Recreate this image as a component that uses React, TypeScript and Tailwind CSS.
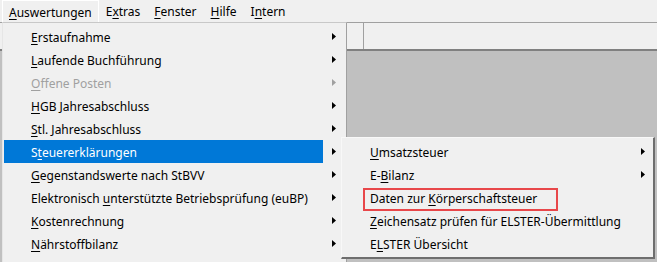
import React from "react";

type Item = {
  pre?: string;
  key?: string;
  post?: string;
  arrow?: boolean;
  disabled?: boolean;
  active?: boolean;
};

const mainItems: Item[] = [
  { key: "E", post: "rstaufnahme", arrow: true },
  { key: "L", post: "aufende Buchführung", arrow: true },
  { key: "O", post: "ffene Posten", arrow: true, disabled: true },
  { key: "H", post: "GB Jahresabschluss", arrow: true },
  { key: "S", post: "tl. Jahresabschluss", arrow: true },
  { pre: "S", key: "t", post: "euererklärungen", arrow: true, active: true },
  { key: "G", post: "egenstandswerte nach StBVV", arrow: true },
  { pre: "Elektronisch ", key: "u", post: "nterstützte Betriebsprüfung (euBP)", arrow: true },
  { key: "K", post: "ostenrechnung", arrow: true },
  { key: "N", post: "ährstoffbilanz", arrow: true },
];

const subItems: Item[] = [
  { key: "U", post: "msatzsteuer", arrow: true },
  { pre: "E-", key: "B", post: "ilanz", arrow: true },
  { pre: "Daten zur ", key: "K", post: "örperschaftsteuer" },
  { key: "Z", post: "eichensatz prüfen für ELSTER-Übermittlung" },
  { pre: "E", key: "L", post: "STER Übersicht" },
];

function Label({ item }: { item: Item }) {
  return (
    <span className="whitespace-pre">
      {item.pre}
      <span className="underline underline-offset-[2px] decoration-[1px]">{item.key}</span>
      {item.post}
    </span>
  );
}

function Arrow({ color }: { color: string }) {
  return (
    <svg width="4" height="7" viewBox="0 0 4 7" className="block">
      <path d="M0 0 L4 3.5 L0 7 Z" fill={color} />
    </svg>
  );
}

function MenuBar() {
  const items: Item[] = [
    { key: "A", post: "uswertungen" },
    { pre: "E", key: "x", post: "tras" },
    { key: "F", post: "enster" },
    { key: "H", post: "ilfe" },
    { pre: "I", key: "n", post: "tern" },
  ];
  return (
    <div className="flex h-[22px] items-stretch pl-[2px] bg-[#f0f0f0]">
      {items.map((it, i) => (
        <div
          key={i}
          className={
            i === 0
              ? "flex items-center pt-[2px] px-[6px] border-x border-t border-white text-black"
              : "flex items-center pt-[2px] px-[7px] text-black"
          }
        >
          <Label item={it} />
        </div>
      ))}
    </div>
  );
}

export default function App() {
  return (
    <div
      className="relative w-[657px] h-[262px] overflow-hidden bg-[#f0f0f0] text-[12px] text-black"
      style={{ fontFamily: '"Segoe UI", "Noto Sans", "Open Sans", sans-serif' }}
    >
      <MenuBar />

      {/* toolbar strip + MDI client area */}
      <div className="flex flex-col h-[240px]">
        <div className="h-[29px] border-t border-[#a0a0a0] border-b-2 border-b-[#808080] flex">
          <div className="ml-[346px] w-[18px] h-full border-r border-[#a0a0a0] border-l border-l-white" />
        </div>
        <div className="flex-1 bg-[#c0c0c0]" />
      </div>

      {/* dropdown */}
      <div className="absolute left-[2px] top-[22px] w-[345px] h-[260px] bg-[#f0f0f0] border-l border-l-[#e6e6e6] border-r border-r-[#a0a0a0] border-t border-t-[#c8c8c8] pt-[2px] pl-[1px] pr-[1px]">
        {mainItems.map((it, i) => (
          <div key={i} className="flex h-[23px] items-center">
            <div
              className={
                it.active
                  ? "flex h-full w-[319px] items-center pt-[2px] pl-[27px] bg-[#0078d7] text-white"
                  : it.disabled
                    ? "flex h-full w-[319px] items-center pt-[2px] pl-[27px] text-[#a0a0a0]"
                    : "flex h-full w-[319px] items-center pt-[2px] pl-[27px]"
              }
            >
              <Label item={it} />
            </div>
            <div className="flex-1 flex justify-center">
              {it.arrow && <Arrow color={it.disabled ? "#a0a0a0" : "#000"} />}
            </div>
          </div>
        ))}
      </div>

      {/* submenu */}
      <div className="absolute left-[341px] top-[137px] w-[314px] h-[122px] bg-[#f0f0f0] border-l border-t border-l-[#f8f8f8] border-t-[#f8f8f8] border-r-2 border-b-2 border-r-[#6e6e6e] border-b-[#6e6e6e] pt-[2px]">
        {subItems.map((it, i) => (
          <div key={i} className="relative flex h-[23px] items-center pl-[28px] pr-[8px]">
            <div className="flex-1 pt-[2px]">
              <Label item={it} />
            </div>
            {it.arrow && <Arrow color="#000" />}
            {i === 2 && (
              <div className="absolute left-[21px] top-[2px] w-[195px] h-[23px] border-2 border-[#e8474a]" />
            )}
          </div>
        ))}
      </div>
    </div>
  );
}
